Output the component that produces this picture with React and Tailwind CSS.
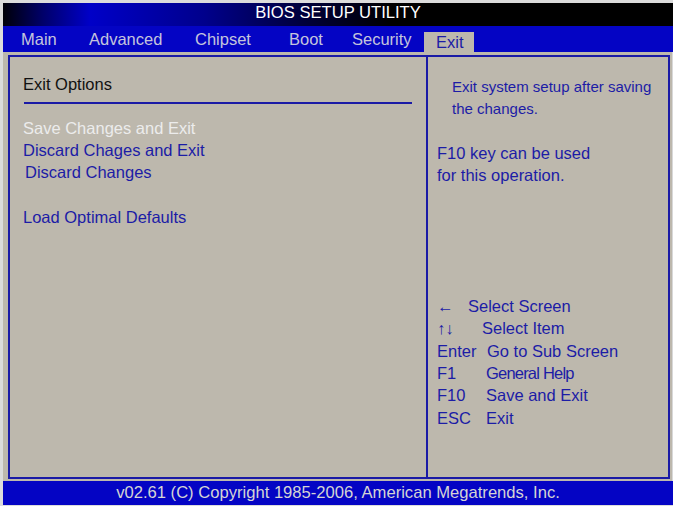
import React from "react";

const F = { fontFamily: '"Liberation Sans", Arial, sans-serif' };

function KeyRow({ k, label, labelClass = "", kw = "w-[30px]" }) {
  return (
    <div className="flex h-[22.4px] items-center">
      <span className={kw + " shrink-0"}>{k}</span>
      <span className={labelClass}>{label}</span>
    </div>
  );
}

export default function App() {
  return (
    <div
      style={F}
      className="w-[673px] h-[506px] bg-[#dcdcdc] pl-[3px] pt-[3px] pb-[1px] flex flex-col overflow-hidden"
    >
      {/* Title bar */}
      <div className="h-[23px] shrink-0 flex items-center justify-center pb-[3px] text-white text-[16.6px] bg-[linear-gradient(90deg,#000008_0%,#00006a_6%,#0000c8_13%,#00008c_30%,#00003a_45%,#000000_58%,#000000_100%)]">
        BIOS SETUP UTILITY
      </div>

      {/* Menu bar */}
      <div className="h-[26px] shrink-0 bg-[#0404c4] flex items-end text-[16.5px] text-[#c4c4dc]">
        <div className="flex items-center h-[26px] pt-[1px] pl-[18px]">
          <span className="w-[68px]">Main</span>
          <span className="w-[106px]">Advanced</span>
          <span className="w-[94px]">Chipset</span>
          <span className="w-[63px]">Boot</span>
          <span className="w-[72px]">Security</span>
        </div>
        <div className="h-[20px] w-[50px] bg-[#bdb8ad] text-[#1c1ca6] flex items-center pl-[12px]">
          Exit
        </div>
      </div>

      {/* Panel */}
      <div className="flex-1 min-h-0 bg-[#bdb8ad] pl-[5px] pr-[2px] pt-[3px] pb-[2px] border-r border-[#d8d8d8]">
        <div className="h-full border-2 border-[#1a1aa6] flex">
          {/* Left column */}
          <div className="w-[418px] shrink-0 border-r-2 border-[#1a1aa6] pt-[16px] pl-[13px] pr-[13px] text-[16.5px]">
            <div className="h-[22px] flex items-center text-[#111]">Exit Options</div>
            <div className="mt-[7px] mx-[1px] h-[2px] bg-[#1a1aa6]" />
            <div className="mt-[13px] text-[#1c1ca6]">
              <div className="h-[22.3px] flex items-center text-[#ececec]">Save Changes and Exit</div>
              <div className="h-[22.3px] flex items-center">Discard Chages and Exit</div>
              <div className="h-[22.3px] flex items-center pl-[2px]">Discard Changes</div>
              <div className="h-[22.3px]" />
              <div className="h-[22.3px] flex items-center">Load Optimal Defaults</div>
            </div>
          </div>

          {/* Right column */}
          <div className="flex-1 pl-[9px] pt-[19px] text-[16.5px] text-[#1c1ca6] flex flex-col">
            <div className="pl-[15px] text-[15px]">
              <div className="h-[22px] flex items-center">Exit system setup after saving</div>
              <div className="h-[22px] flex items-center">the changes.</div>
            </div>
            <div className="h-[22px]" />
            <div className="h-[22px] flex items-center">F10 key can be used</div>
            <div className="h-[22px] flex items-center">for this operation.</div>

            <div className="mt-[109px]">
              <KeyRow k="←" label="Select Screen" kw="w-[31px]" />
              <KeyRow k="↑↓" label="Select Item" kw="w-[45px]" />
              <KeyRow k="Enter" label="Go to Sub Screen" kw="w-[50px]" />
              <KeyRow k="F1" label="General Help" kw="w-[49px]" labelClass="tracking-[-0.8px]" />
              <KeyRow k="F10" label="Save and Exit" kw="w-[49px]" />
              <KeyRow k="ESC" label="Exit" kw="w-[49px]" />
            </div>
          </div>
        </div>
      </div>

      {/* Footer */}
      <div className="h-[24px] shrink-0 bg-[#0404c4] flex items-center justify-center text-[16.6px] text-[#d4d4d4]">
        v02.61 (C) Copyright 1985-2006, American Megatrends, Inc.
      </div>
    </div>
  );
}
